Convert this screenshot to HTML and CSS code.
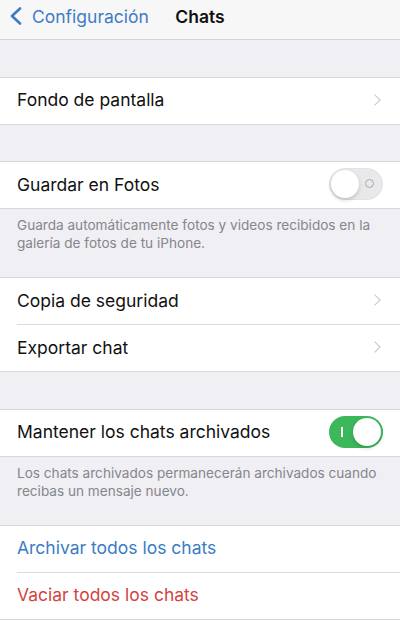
FILE: index.html
```html
<!DOCTYPE html>
<html lang="es">
<head>
    <meta charset="UTF-8">
    <meta name="viewport" content="width=device-width, initial-scale=1.0">
    <title>Chats</title>
    <link rel="stylesheet" href="styles.css">
</head>
<body>

    <header class="nav">
        <a class="nav-back" href="#">
            <svg class="back-icon" viewBox="0 0 13 18" width="13" height="18">
                <path d="M11 1.5 L3 9 L11 16.5" fill="none" stroke="currentColor" stroke-width="2.6" stroke-linecap="round" stroke-linejoin="round"/>
            </svg>
            <span>Configuración</span>
        </a>
        <h1 class="nav-title">Chats</h1>
        <div></div>
    </header>

    <main class="settings">
        <div class="spacer"></div>

        <section class="group">
            <div class="row">
                <div class="row-body">
                    <span class="label">Fondo de pantalla</span>
                    <span class="chevron"></span>
                </div>
            </div>
        </section>

        <div class="spacer"></div>

        <section class="group">
            <div class="row">
                <div class="row-body">
                    <span class="label">Guardar en Fotos</span>
                    <span class="switch off"><span class="mark"></span><span class="knob"></span></span>
                </div>
            </div>
        </section>
        <p class="note">Guarda automáticamente fotos y videos recibidos en la galería de fotos de tu iPhone.</p>

        <section class="group">
            <div class="row">
                <div class="row-body">
                    <span class="label">Copia de seguridad</span>
                    <span class="chevron"></span>
                </div>
            </div>
            <div class="row">
                <div class="row-body">
                    <span class="label">Exportar chat</span>
                    <span class="chevron"></span>
                </div>
            </div>
        </section>

        <div class="spacer"></div>

        <section class="group">
            <div class="row">
                <div class="row-body">
                    <span class="label">Mantener los chats archivados</span>
                    <span class="switch on"><span class="mark"></span><span class="knob"></span></span>
                </div>
            </div>
        </section>
        <p class="note">Los chats archivados permanecerán archivados cuando recibas un mensaje nuevo.</p>

        <section class="group">
            <div class="row">
                <div class="row-body">
                    <span class="label action">Archivar todos los chats</span>
                </div>
            </div>
            <div class="row">
                <div class="row-body">
                    <span class="label danger">Vaciar todos los chats</span>
                </div>
            </div>
        </section>
    </main>

</body>
</html>
```

FILE: styles.css
```css
body {
    margin: 0;
    font-family: Inter, "Noto Sans", sans-serif;
    background-color: #efeff4;
    color: #111;
    width: 400px;
    overflow: hidden;
}
.nav {
    height: 40px;
    display: grid;
    grid-template-columns: 1fr auto 1fr;
    align-items: center;
    padding-bottom: 7px;
    box-sizing: border-box;
    background-color: #f7f7f8;
    border-bottom: 1px solid #d4d4d8;
}
.nav-back {
    display: flex;
    align-items: center;
    gap: 10px;
    padding-left: 9px;
    color: #3f7cc3;
    text-decoration: none;
    font-size: 17.5px;
}
.back-icon {
    display: block;
}
.nav-title {
    margin: 0;
    font-size: 17.5px;
    font-weight: 600;
    color: #111;
}
.spacer {
    height: 36.5px;
}
.group {
    background-color: white;
    border-top: 1px solid #d8d8dc;
    border-bottom: 1px solid #d8d8dc;
}
.row {
    padding-left: 17px;
}
.row-body {
    height: 47px;
    display: flex;
    align-items: center;
    justify-content: space-between;
    padding-right: 17px;
    padding-bottom: 2px;
    box-sizing: border-box;
    border-bottom: 1px solid #dcdce0;
}
.row:last-child .row-body {
    height: 46px;
    border-bottom: none;
}
.label {
    font-size: 17.5px;
    color: #111;
}
.label.action {
    color: #3a7cc4;
}
.label.danger {
    color: #d2443f;
}
.chevron {
    width: 7px;
    height: 7px;
    border-right: 1.8px solid #c6c6ca;
    border-bottom: 1.8px solid #c6c6ca;
    transform: rotate(-45deg);
    margin-right: 4px;
}
.note {
    margin: 0;
    height: 68px;
    box-sizing: border-box;
    padding: 7px 17px 0;
    font-size: 13.6px;
    line-height: 18px;
    color: #86868b;
}
.switch {
    position: relative;
    width: 54px;
    height: 32px;
    border-radius: 16px;
    box-sizing: border-box;
}
.switch.off {
    background-color: #e9e9eb;
    border: 1px solid #e2e2e5;
}
.switch.on {
    background-color: #3cb85b;
}
.knob {
    position: absolute;
    top: 2px;
    width: 28px;
    height: 28px;
    border-radius: 50%;
    background-color: white;
    box-shadow: 0 2px 4px rgba(0, 0, 0, 0.18);
}
.switch.off .knob {
    top: 1px;
    left: 1px;
}
.switch.on .knob {
    right: 2px;
}
.switch.off .mark {
    position: absolute;
    right: 8px;
    top: 10px;
    width: 7px;
    height: 7px;
    border: 1.5px solid #a9a9ad;
    border-radius: 50%;
}
.switch.on .mark {
    position: absolute;
    left: 12px;
    top: 11px;
    width: 1.5px;
    height: 10px;
    background-color: white;
}
```
